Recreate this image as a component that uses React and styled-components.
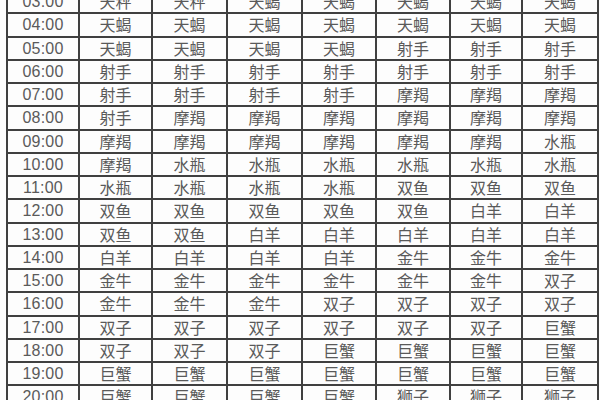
import React from 'react';
import styled, { createGlobalStyle } from 'styled-components';

const GlobalStyle = createGlobalStyle`
  html, body {
    margin: 0;
    padding: 0;
    background: #fdfdfd;
    overflow: hidden;
  }
`;

const Page = styled.div`
  width: 600px;
  height: 400px;
  overflow: hidden;
  padding-left: 6px;
  box-sizing: border-box;
`;

const Table = styled.table`
  border-collapse: collapse;
  table-layout: fixed;
  margin-top: -11px;
  width: 593px;
  font-family: "Liberation Sans", "Noto Sans CJK SC", sans-serif;
  font-size: 16px;
  color: #5a5a5a;
`;

const Row = styled.tr`
  height: 23.25px;
`;

const Cell = styled.td`
  border: 2px solid #404040;
  padding: 0;
  text-align: center;
  vertical-align: middle;
  line-height: 19px;
  white-space: nowrap;
  font-family: ${(p) => (p.$time ? '"Liberation Sans", sans-serif' : '"Noto Sans CJK SC", sans-serif')};
  letter-spacing: ${(p) => (p.$time ? '0.2px' : '0')};
`;

const rows = [
  ['03:00', '天秤 天秤 天蝎 天蝎 天蝎 天蝎 天蝎'],
  ['04:00', '天蝎 天蝎 天蝎 天蝎 天蝎 天蝎 天蝎'],
  ['05:00', '天蝎 天蝎 天蝎 天蝎 射手 射手 射手'],
  ['06:00', '射手 射手 射手 射手 射手 射手 射手'],
  ['07:00', '射手 射手 射手 射手 摩羯 摩羯 摩羯'],
  ['08:00', '射手 摩羯 摩羯 摩羯 摩羯 摩羯 摩羯'],
  ['09:00', '摩羯 摩羯 摩羯 摩羯 摩羯 摩羯 水瓶'],
  ['10:00', '摩羯 水瓶 水瓶 水瓶 水瓶 水瓶 水瓶'],
  ['11:00', '水瓶 水瓶 水瓶 水瓶 双鱼 双鱼 双鱼'],
  ['12:00', '双鱼 双鱼 双鱼 双鱼 双鱼 白羊 白羊'],
  ['13:00', '双鱼 双鱼 白羊 白羊 白羊 白羊 白羊'],
  ['14:00', '白羊 白羊 白羊 白羊 金牛 金牛 金牛'],
  ['15:00', '金牛 金牛 金牛 金牛 金牛 金牛 双子'],
  ['16:00', '金牛 金牛 金牛 双子 双子 双子 双子'],
  ['17:00', '双子 双子 双子 双子 双子 双子 巨蟹'],
  ['18:00', '双子 双子 双子 巨蟹 巨蟹 巨蟹 巨蟹'],
  ['19:00', '巨蟹 巨蟹 巨蟹 巨蟹 巨蟹 巨蟹 巨蟹'],
  ['20:00', '巨蟹 巨蟹 巨蟹 巨蟹 狮子 狮子 狮子'],
];

const widths = [72, 73, 75, 75, 74, 74, 72, 76];

export default function App() {
  return (
    <Page>
      <GlobalStyle />
      <Table>
        <colgroup>
          {widths.map((w, i) => (
            <col key={i} style={{ width: w }} />
          ))}
        </colgroup>
        <tbody>
          {rows.map(([time, signs]) => (
            <Row key={time}>
              <Cell $time>{time}</Cell>
              {signs.split(' ').map((s, i) => (
                <Cell key={i}>{s}</Cell>
              ))}
            </Row>
          ))}
        </tbody>
      </Table>
    </Page>
  );
}
